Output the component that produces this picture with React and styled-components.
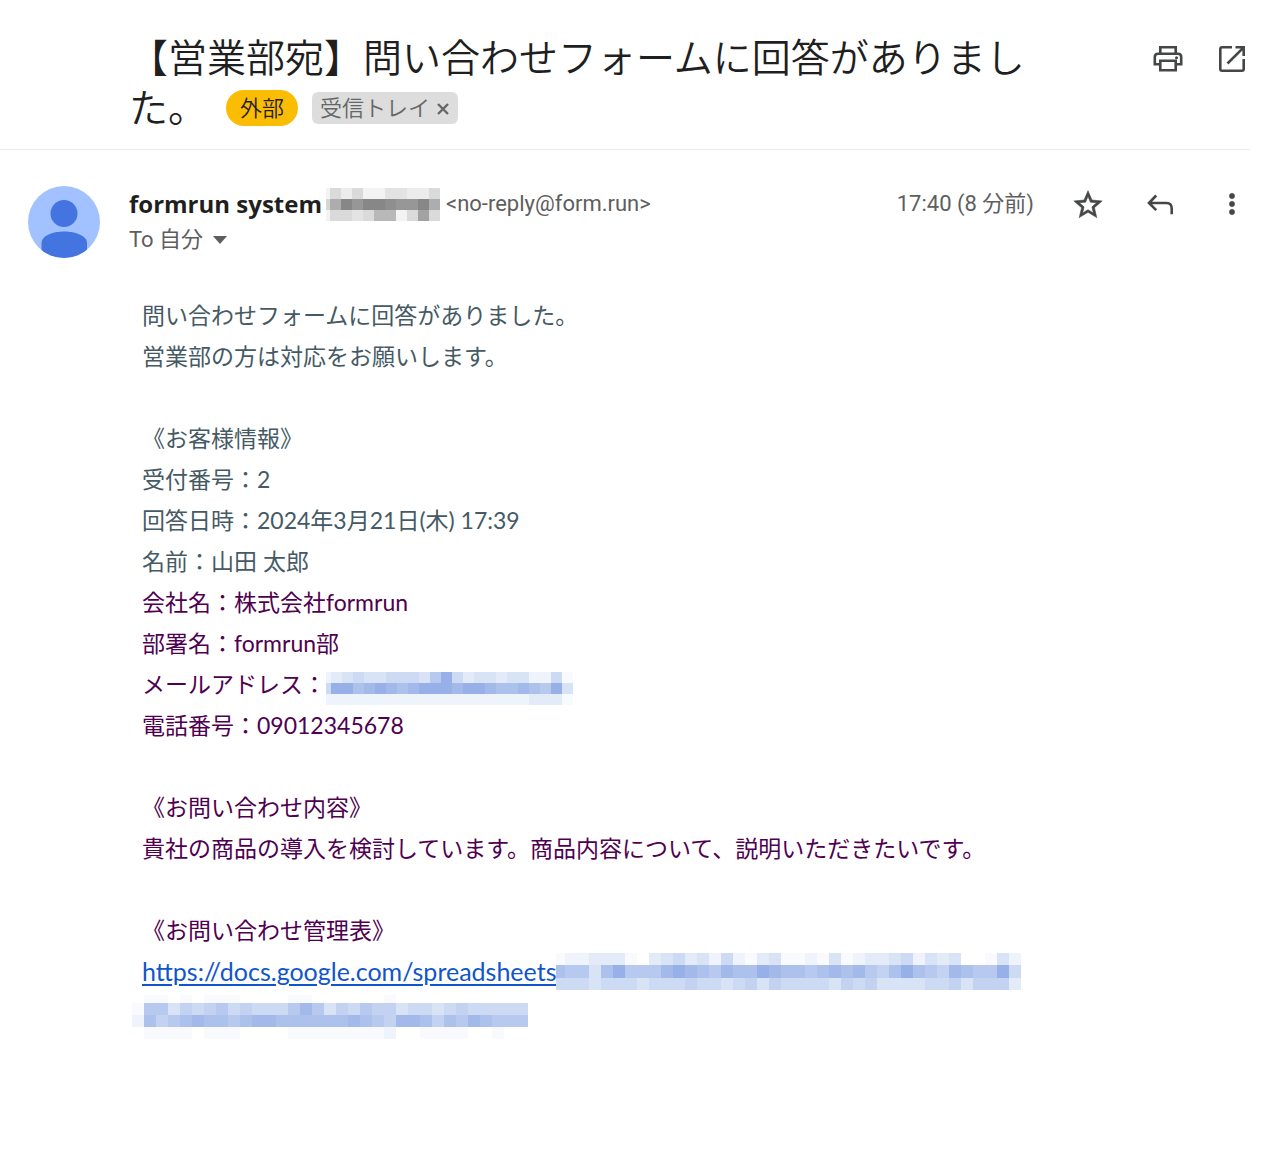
import React from "react";
import styled, { createGlobalStyle } from "styled-components";

const GlobalStyle = createGlobalStyle`
  * { box-sizing: border-box; }
  body {
    margin: 0;
    background: #fff;
    color: #1f1f1f;
    font-family: "Open Sans", "Noto Sans CJK JP", sans-serif;
  }
  h1, p { margin: 0; }
`;

const Page = styled.main`
  padding-right: 38px;
  padding-bottom: 40px;
`;

const SubjectBar = styled.header`
  display: flex;
  align-items: flex-start;
  justify-content: space-between;
  gap: 80px;
  padding: 30px 0 19px 129px;
  border-bottom: 1px solid #ececec;
`;

const Subject = styled.div`
  flex: 1;
  max-width: 932px;
  font-family: "Noto Sans CJK JP", sans-serif;
  font-size: 39px;
  font-weight: 350;
  line-height: 50px;
`;

const Title = styled.h1`
  display: inline;
  font: inherit;
`;

const Chip = styled.span`
  display: inline-flex;
  align-items: center;
  vertical-align: 6px;
  height: ${(p) => (p.$external ? 36 : 32)}px;
  margin-left: ${(p) => (p.$external ? 19 : 14)}px;
  padding: 0 ${(p) => (p.$external ? 14 : 8)}px 4px;
  border-radius: ${(p) => (p.$external ? 18 : 6)}px;
  background: ${(p) => (p.$external ? "#fbbc04" : "#ddd")};
  color: ${(p) => (p.$external ? "#1f1f1f" : "#666")};
  font-size: 22px;
  line-height: 28px;
`;

const ChipClose = styled.button`
  display: flex;
  margin-left: 6px;
  padding: 6px 0 0;
  border: 0;
  background: none;
  color: #666;
`;

const Actions = styled.div`
  display: flex;
  align-items: center;
  gap: ${(p) => p.$gap}px;
`;

const TitleActions = styled(Actions)`
  padding-top: 11px;
`;

const IconButton = styled.button`
  display: flex;
  align-items: center;
  justify-content: center;
  width: 36px;
  height: 36px;
  padding: 0;
  border: 0;
  background: none;
  color: #444746;
`;

const Sender = styled.section`
  display: flex;
  gap: 29px;
  padding: 36px 0 0 28px;
`;

const Details = styled.div`
  flex: 1;
`;

const SenderRow = styled.div`
  display: flex;
  align-items: center;
  justify-content: space-between;
  height: 36px;
`;

const From = styled.div`
  display: flex;
  align-items: center;
  font-size: 22px;
  line-height: 36px;
`;

const Name = styled.strong`
  margin-right: 4px;
  font-family: "Open Sans", sans-serif;
  font-size: 24px;
  font-weight: 700;
`;

const Address = styled.span`
  margin-left: 6px;
  color: #5e5e5e;
  font-family: Roboto, sans-serif;
`;

const Meta = styled.div`
  display: flex;
  align-items: center;
  gap: 36px;
`;

const Time = styled.time`
  color: #5e5e5e;
  font-family: Roboto, "Noto Sans CJK JP", sans-serif;
  font-size: 22px;
  line-height: 36px;
`;

const Recipient = styled.button`
  display: flex;
  align-items: center;
  gap: 10px;
  height: 36px;
  padding: 0;
  border: 0;
  background: none;
  color: #5e5e5e;
  font-family: Roboto, "Noto Sans CJK JP", sans-serif;
  font-size: 22px;
  line-height: 36px;
`;

const Body = styled.article`
  padding: 37px 0 0 132px;
  font-family: Lato, "Noto Sans CJK JP", sans-serif;
  font-size: 23px;
  line-height: 41px;
`;

const Block = styled.div`
  padding-left: 10px;
  padding-bottom: ${(p) => (p.$end ? 41 : 0)}px;
  color: ${(p) => (p.$quoted ? "#500050" : "#455a64")};
`;

const Line = styled.p`
  display: flex;
  align-items: ${(p) => (p.$low ? "flex-end" : "center")};
  white-space: pre-wrap;
`;

const SheetLink = styled.a`
  color: #1155cc;
  font-size: 25px;
  text-decoration: underline;
  text-underline-offset: 3px;
`;

const LinkTail = styled.div`
  padding-top: 3px;
`;

const Pixels = styled.svg`
  display: block;
  flex: none;
`;

const BLUES = ["#ffffff", "#f8fafe", "#eff3fc", "#e3eaf8", "#d8e3f6", "#cddaf4", "#c3d2f1", "#b7c9ee", "#adc1ed", "#a2b9ea", "#97b0e8"];
const GREYS = ["#f3f3f3", "#ececec", "#e3e3e3", "#dadada", "#d6d6d6", "#b8b8b8", "#adadad", "#a2a2a2", "#979797", "#8f8f8f", "#878787"];

const NAME_MASK = ["03130022113", "46a8aa988a6", "03323550373"];
const MAIL_MASK = ["23454455547a53443442251", "5aa89a989aaa9aa988987a4", "22222222222222222223331"];
const LINK_MASK = [
  "122333103453425213411214123345243400142",
  "87748a7779a987988a98878989768a8769877a5",
  "555455545556554564655554656444455646663",
];
const LINK_TAIL_MASK = [
  "0110101110000110000001000000000000",
  "1774656756555797465766455456555550",
  "2867898878998888889876998687987770",
  "0111101110000111111112001111001000",
];

function Mosaic({ rows, palette = BLUES, first, cell, rowHeights }) {
  const columns = Math.max(...rows.map((row) => row.length));
  const width = first + (columns - 1) * cell;
  const height = rowHeights.reduce((a, b) => a + b, 0);
  const tops = rowHeights.map((_, r) => rowHeights.slice(0, r).reduce((a, b) => a + b, 0));
  return (
    <Pixels width={width} height={height} aria-hidden="true" shapeRendering="crispEdges">
      {rows.map((row, r) =>
        [...row].map((c, i) => (
          <rect
            key={`${r}-${i}`}
            x={i ? first + (i - 1) * cell : 0}
            y={tops[r]}
            width={i ? cell : first}
            height={rowHeights[r]}
            fill={palette[c === "a" ? 10 : Number(c)]}
          />
        ))
      )}
    </Pixels>
  );
}

function Icon({ d, size, weight }) {
  return (
    <svg width={size} height={size} viewBox="0 0 24 24" fill="currentColor" stroke="currentColor" strokeWidth={weight} aria-hidden="true">
      <path d={d} />
    </svg>
  );
}

const PrintIcon = () => (
  <svg width="36" height="36" viewBox="0 0 36 36" fill="none" stroke="currentColor" strokeWidth="2.6" aria-hidden="true">
    <path d="M10.3 12V6.3h15.4V12M9.5 23.2H4.8V16q0-3.2 3.2-3.2h20q3.2 0 3.2 3.2v7.2h-4.7M10.3 19.8h15.4v9.4H10.3z" />
    <circle cx="26.5" cy="16.8" r="1.5" fill="currentColor" stroke="none" />
  </svg>
);

const OpenIcon = () => (
  <svg width="36" height="36" viewBox="0 0 36 36" fill="none" stroke="currentColor" strokeWidth="2.6" aria-hidden="true">
    <path d="M18 6.3H8q-1.7 0-1.7 1.7v20q0 1.7 1.7 1.7h20q1.7 0 1.7-1.7V18M21.5 6.3h8.2V15M29.7 6.3L13.5 22.5" />
  </svg>
);

const ReplyIcon = () => (
  <svg width="36" height="36" viewBox="0 0 36 36" fill="none" stroke="currentColor" strokeWidth="2.6" aria-hidden="true">
    <path d="M14.2 9.5L7 17l7.2 7.2M7 17h17.5q5.2 0 5.2 5.2v6" />
  </svg>
);

const CloseIcon = () => (
  <svg width="14" height="14" viewBox="0 0 14 14" fill="none" stroke="currentColor" strokeWidth="2.4" aria-hidden="true">
    <path d="M2 2l10 10M12 2L2 12" />
  </svg>
);

const Avatar = () => (
  <svg width="72" height="72" viewBox="0 0 72 72" aria-hidden="true">
    <clipPath id="avatar">
      <circle cx="36" cy="36" r="36" />
    </clipPath>
    <g clipPath="url(#avatar)">
      <rect width="72" height="72" fill="#a1c2ff" />
      <circle cx="36" cy="27.5" r="13.5" fill="#4374e0" />
      <path d="M13.5 72V57C13.5 50 24 45.5 36 45.5S59 50 59 57v15z" fill="#4374e0" />
    </g>
  </svg>
);

const STAR =
  "M22 9.84l-7.19-.62L12 2.6 9.19 9.23 2 9.84l5.46 4.73L5.82 21.6 12 17.87l6.18 3.73-1.63-7.03L22 9.84zM12 16l-3.76 2.27 1-4.28-3.32-2.88 4.38-.38L12 6.7l1.71 4.04 4.38.38-3.32 2.88 1 4.28L12 16z";

const DOTS =
  "M12 8c1.1 0 2-.9 2-2s-.9-2-2-2-2 .9-2 2 .9 2 2 2zm0 2c-1.1 0-2 .9-2 2s.9 2 2 2 2-.9 2-2-.9-2-2-2zm0 6c-1.1 0-2 .9-2 2s.9 2 2 2 2-.9 2-2-.9-2-2-2z";

export default function App() {
  return (
    <Page>
      <GlobalStyle />
      <SubjectBar>
        <Subject>
          <Title>【営業部宛】問い合わせフォームに回答がありました。</Title>
          <Chip $external>外部</Chip>
          <Chip>
            受信トレイ
            <ChipClose aria-label="ラベルを削除">
              <CloseIcon />
            </ChipClose>
          </Chip>
        </Subject>
        <TitleActions $gap={28}>
          <IconButton aria-label="印刷"><PrintIcon /></IconButton>
          <IconButton aria-label="新しいウィンドウで開く"><OpenIcon /></IconButton>
        </TitleActions>
      </SubjectBar>

      <Sender>
        <Avatar />
        <Details>
          <SenderRow>
            <From>
              <Name>formrun system</Name>
              <Mosaic rows={NAME_MASK} palette={GREYS} first={4} cell={11} rowHeights={[11, 11, 11]} />
              <Address>&lt;no-reply@form.run&gt;</Address>
            </From>
            <Meta>
              <Time>17:40 (8 分前)</Time>
              <Actions $gap={36}>
                <IconButton aria-label="スター"><Icon d={STAR} size={34} weight={0.4} /></IconButton>
                <IconButton aria-label="返信"><ReplyIcon /></IconButton>
                <IconButton aria-label="その他"><Icon d={DOTS} size={32} weight={0.4} /></IconButton>
              </Actions>
            </Meta>
          </SenderRow>
          <Recipient>
            To 自分
            <svg width="14" height="8" viewBox="0 0 14 8" fill="currentColor" aria-hidden="true">
              <path d="M0 0h14L7 8z" />
            </svg>
          </Recipient>
        </Details>
      </Sender>

      <Body>
        <Block $end>
          <Line>問い合わせフォームに回答がありました。</Line>
          <Line>営業部の方は対応をお願いします。</Line>
        </Block>
        <Block>
          <Line>《お客様情報》</Line>
          <Line>受付番号：2</Line>
          <Line>回答日時：2024年3月21日(木) 17:39</Line>
          <Line>名前：山田 太郎</Line>
        </Block>
        <Block $quoted $end>
          <Line>会社名：株式会社formrun</Line>
          <Line>部署名：formrun部</Line>
          <Line $low>
            メールアドレス：
            <Mosaic rows={MAIL_MASK} first={5} cell={11} rowHeights={[11, 11, 11]} />
          </Line>
          <Line>電話番号：09012345678</Line>
        </Block>
        <Block $quoted $end>
          <Line>《お問い合わせ内容》</Line>
          <Line>貴社の商品の導入を検討しています。商品内容について、説明いただきたいです。</Line>
        </Block>
        <Block $quoted>
          <Line>《お問い合わせ管理表》</Line>
          <Line>
            <SheetLink href="#spreadsheets">https://docs.google.com/spreadsheets</SheetLink>
            <Mosaic rows={LINK_MASK} first={9} cell={12} rowHeights={[12, 13, 12]} />
          </Line>
        </Block>
        <LinkTail>
          <Mosaic rows={LINK_TAIL_MASK} first={12} cell={12} rowHeights={[8, 12, 12, 12]} />
        </LinkTail>
      </Body>
    </Page>
  );
}
